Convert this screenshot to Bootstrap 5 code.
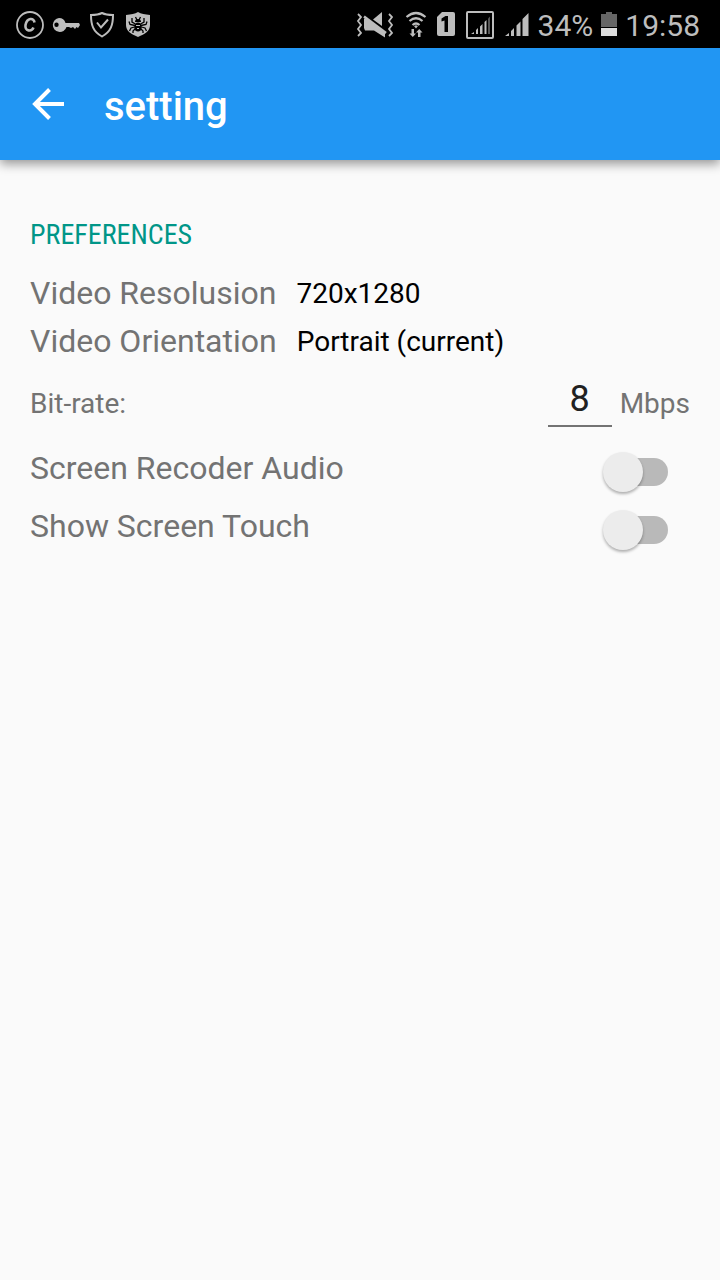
<!DOCTYPE html>
<html lang="en">
<head>
<meta charset="utf-8">
<meta name="viewport" content="width=device-width, initial-scale=1">
<title>setting</title>
<link href="https://cdn.jsdelivr.net/npm/bootstrap@5.3.0/dist/css/bootstrap.min.css" rel="stylesheet">
<style>
  body { font-family: Roboto, "Noto Sans", sans-serif; background: #fafafa; color: #737373; font-size: 28px; line-height: 32px; }
  .status-bar { background: #000; color: #bdbdbd; height: 48px; padding: 2px 20px 0 16px; font-size: 30px; }
  .status-bar svg { display: block; flex: none; }
  .status-bar span { padding-top: 2px; }
  .app-bar { background: #2196f3; height: 112px; padding: 0 30px; gap: 38px; box-shadow: 0 4px 10px rgba(0,0,0,.4); }
  .app-bar h1 { font-size: 40px; line-height: 48px; font-weight: 500; padding-top: 6px; }
  .settings { padding: 57px 30px; }
  .section-title { font-family: "Roboto Condensed", Roboto, sans-serif; font-size: 28px; line-height: 36px; color: #009688; margin-bottom: 16px; }
  .setting-label { font-size: 32px; line-height: 48px; }
  .pick-row { gap: 20px; }
  .pick { appearance: none; border: 0; background: none; color: #000; padding: 2px 0 0; height: 48px; }
  .rate-row { height: 78px; }
  .rate-input { width: 64px; height: 46px; border: 0; border-bottom: 2px solid #737373; background: none; color: #212121; font-size: 36px; text-align: center; padding: 0 0 8px; }
  .toggle-row { height: 58px; padding-right: 22px; }
  .toggle-row .setting-label { padding-bottom: 8px; }
  .toggle.form-check-input {
    position: relative; width: 58px; height: 28px; margin: 0; border: 0; border-radius: 14px;
    background: #b9b9b9;
  }
  .toggle::before {
    content: ""; position: absolute; left: -7px; top: -6px; width: 40px; height: 40px;
    border-radius: 50%; background: #ececec; box-shadow: 0 2px 3px rgba(0,0,0,.3);
  }
  .toggle:checked { background: #80cbc4; }
  .toggle:checked::before { left: 25px; background: #009688; }
</style>
</head>
<body>
<div class="status-bar d-flex align-items-center justify-content-between">
  <div class="d-flex align-items-center gap-2">
    <svg width="28" height="28" viewBox="0 0 28 28" fill="none" stroke="#bdbdbd" aria-hidden="true">
      <circle cx="14" cy="14" r="13" stroke-width="1.800"/>
      <path d="M18.500 11.500C18 6.500 11 6.500 9.500 14c-.8 6.500 6 7 8 2.500" stroke-width="2.600"/>
    </svg>
    <svg width="28" height="28" viewBox="0 0 28 28" fill="#bdbdbd" aria-hidden="true">
      <path fill-rule="evenodd" d="M7 7a7 7 0 0 1 6.500 5H27l1 2-2 3-1.500-1-1.500 2-2-2-2 1-2-1h-2.500A7 7 0 1 1 7 7ZM4.500 11.500a2.200 2.200 0 1 0 0 4.400 2.200 2.200 0 0 0 0-4.400Z"/>
    </svg>
    <svg width="28" height="28" viewBox="0 0 28 28" fill="none" stroke="#bdbdbd" stroke-width="2" aria-hidden="true">
      <path d="M14 2c3 1.500 7 2 11 2 0 10-2 16.500-11 21.500C5 20.500 3 14 3 4c4 0 8-.5 11-2Z"/>
      <path d="m9 11.500 4 5 7-8"/>
    </svg>
    <svg width="28" height="28" viewBox="0 0 28 28" aria-hidden="true">
      <path fill="#bdbdbd" d="M14 1c3 2 7 2.500 12 3v10c0 6-5 9-12 12C7 23 2 20 2 14V4c5-.5 9-1 12-3Z"/>
      <ellipse cx="14" cy="16" rx="3.800" ry="4.500"/>
      <path d="M11 11a3 3 0 0 1 6 0Z"/>
      <path fill="none" stroke="#000" stroke-width="1.300" d="M11.500 13 8 11V7m3 7.500-5-1-1-3M10.500 16 7 17l-1.500 3m5.500-2-2 2v2m7.500-9 3.500-2V7m-3 7.500 5-1 1-3M17.500 16l3.500 1 1.500 3M17 18l2 2v2M11.500 6l1.500 3m3.500-3L15 9"/>
      <path fill="none" stroke="#bdbdbd" d="M12 14.500h4m-3 3h2"/>
    </svg>
  </div>
  <div class="d-flex align-items-center">
    <svg class="me-2" width="40" height="28" viewBox="0 0 40 28" fill="#bdbdbd" aria-hidden="true">
      <path d="M8 7.500h3L29 21v5.500L18 19.500H9L8 17Zm9 1L26 1v14Z"/>
      <path d="M8 5.500 30 22" stroke="#bdbdbd" stroke-width="2.500"/>
      <path d="m2 3 3 3-3 4 3 4-3 4 3 4-3 3M33 3l3 3-3 4 3 4-3 4 3 4-3 3" fill="none" stroke="#bdbdbd" stroke-width="1.800"/>
    </svg>
    <svg class="me-2" width="24" height="28" viewBox="2 0 24 28" fill="none" stroke="#bdbdbd" stroke-width="2.200" aria-hidden="true">
      <path d="M4.500 6q9.500-8 19 0M7.500 10q6.500-5.500 13 0M10.500 14q3.500-3 7 0"/>
      <path fill="#bdbdbd" stroke="none" d="m12 15 2-.8 2 .8-2 2.500ZM9.500 18H12v4.500h2L10.800 26 7.500 22.500h2Zm6.500 8v-4.500h-2l3.200-3.500 3.300 3.500h-2V26Z"/>
    </svg>
    <svg width="20" height="28" viewBox="0 0 20 28" aria-hidden="true">
      <path fill="#bdbdbd" d="M6 1h11q2 0 2 2v20q0 2-2 2H3q-2 0-2-2V6Z"/>
      <path d="M9.500 5H12v16H8.500V9.500L5.500 10.500V7.500Z"/>
    </svg>
    <svg class="ms-2 me-2" width="32" height="28" viewBox="0 0 32 28" fill="#bdbdbd" aria-hidden="true">
      <rect x="3" y="1" width="26" height="26" rx="1" fill="none" stroke="#bdbdbd" stroke-width="2"/>
      <path d="m7 23 3-2v2Zm5 0v-4l2-2v6Zm4 0v-7.500l2.500-2.500v10Zm4.500 0V11l2-2v14Z"/>
      <path fill="#555" d="M24 23V7.500L26 5.500V23Z"/>
    </svg>
    <svg class="me-2" width="26" height="28" viewBox="0 0 26 28" fill="#bdbdbd" aria-hidden="true">
      <path d="m1 25 4-3v3Zm6 0v-5l3-3v8Zm5.500 0V14.500l4-4V25Zm6 0V8l6-6v23Z"/>
    </svg>
    <span>34%</span>
    <svg class="ms-2 me-2" width="16" height="28" viewBox="0 0 16 28" aria-hidden="true">
      <path fill="#666" d="M0 3h5V1h6v2h5v13H0Z"/>
      <path fill="#ddd" d="M0 17h16v8H0Z"/>
    </svg>
    <span>19:58</span>
  </div>
</div>

<header class="app-bar d-flex align-items-center">
  <button type="button" class="btn p-0 border-0" aria-label="Back">
    <svg class="d-block" width="36" height="36" viewBox="0 0 36 36" fill="none" stroke="#fff" stroke-width="4" aria-hidden="true">
      <path d="M34 18H5M19.500 3.500 5 18l14.500 14.500"/>
    </svg>
  </button>
  <h1 class="text-white m-0">setting</h1>
</header>

<main class="settings">
  <h2 class="section-title fw-normal">PREFERENCES</h2>
  <div class="pick-row d-flex align-items-center">
    <label class="setting-label" for="resolution">Video Resolusion</label>
    <select class="pick flex-grow-1" id="resolution"><option>720x1280</option></select>
  </div>
  <div class="pick-row d-flex align-items-center">
    <label class="setting-label" for="orientation">Video Orientation</label>
    <select class="pick flex-grow-1" id="orientation"><option>Portrait (current)</option></select>
  </div>
  <div class="rate-row d-flex align-items-center">
    <label class="flex-grow-1" for="bitrate">Bit-rate:</label>
    <input class="rate-input me-2" id="bitrate" type="text" inputmode="numeric" value="8">
    <span>Mbps</span>
  </div>
  <div class="toggle-row d-flex align-items-center justify-content-between">
    <label class="setting-label" for="audio">Screen Recoder Audio</label>
    <input class="toggle form-check-input" type="checkbox" role="switch" id="audio">
  </div>
  <div class="toggle-row d-flex align-items-center justify-content-between">
    <label class="setting-label" for="touch">Show Screen Touch</label>
    <input class="toggle form-check-input" type="checkbox" role="switch" id="touch">
  </div>
</main>
<script src="https://cdn.jsdelivr.net/npm/bootstrap@5.3.0/dist/js/bootstrap.bundle.min.js"></script>
</body>
</html>
